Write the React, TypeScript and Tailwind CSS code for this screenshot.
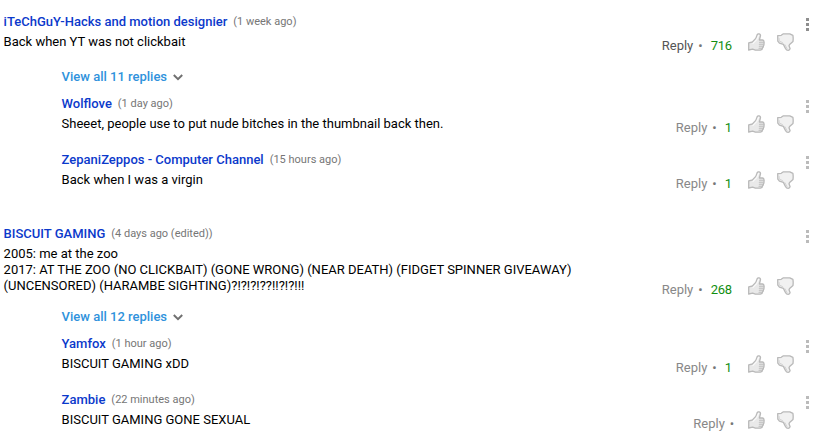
import React from "react";

type Post = {
  author: string;
  time: string;
  lines: string[];
  likes?: string;
  active?: boolean;
};

function ThumbUp() {
  return (
    <svg className="h-[18px] w-[17px]" viewBox="0 0 17 18" fill="none" strokeLinejoin="round" strokeLinecap="round">
      <path fill="#e9e9e9" stroke="#b9b9b9" strokeWidth="1.3" d="M.7 9.8 4.4 9 7.8 5.4 9.2 1.6Q9.8.5 11.2.9q1.6.5 1.2 2.1L11.4 7h3q1.7.2 1.5 1.8.5 1 0 2 .3 1.2-.5 2.1.1 1.3-.9 2 0 1.9-2.2 2.3H7.4L4.6 16.2.7 17Z" />
      <path stroke="#bdbdbd" strokeWidth="1.1" d="M11.5 9.2h4M11.3 11.3h4M11.3 13.3h3.6M11 15.3h3" />
      <path stroke="#fafafa" strokeWidth="1.2" d="M5 10.3 8.9 6.3 10.6 2.4" />
    </svg>
  );
}

function ThumbDown() {
  return (
    <svg className="h-[18px] w-[17px]" viewBox="0 0 17 18" fill="none" strokeLinejoin="round" strokeLinecap="round">
      <path fill="#f1f1f1" stroke="#b9b9b9" strokeWidth="1.3" d="M.7 2.6 4.2 2.3 6.4.8h6.4l3.1 1.5q.5 2.7.1 6.1L12.6 11.4 12 12.7 13.1 15.7q-.3 1.4-1.8 1.6-1.8.1-2.7-1.5L6.4 11.4 2.4 10.1.8 8.2Z" />
      <path stroke="#d2d2d2" strokeWidth="1" d="M2.1 5.5v2.4L5.5 9.6M8 11.8l2 3.9" />
    </svg>
  );
}

function Comment({ post }: { post: Post }) {
  return (
    <article className="flex">
      <div className="min-w-0 flex-1 pb-[5px]">
        <header className="flex h-5 items-center gap-1.5 whitespace-nowrap">
          <a className="text-[13px] font-medium text-[#0b39cb]">{post.author}</a>
          <span className="text-[11px] text-[#767676]">({post.time})</span>
        </header>
        <div className="mt-0.5 text-[13px] leading-4 whitespace-nowrap text-black">
          {post.lines.map((line) => (
            <p key={line}>{line}</p>
          ))}
        </div>
      </div>
      <div className="-mb-px flex h-5 items-center self-end text-[13px]">
        <span className={post.active ? "text-[#555555]" : "text-[#888888]"}>Reply</span>
        <span className="ml-[5px] text-[#777777]">•</span>
        {post.likes && <span className="ml-2 tracking-[-0.3px] text-[#128e12]">{post.likes}</span>}
      </div>
      <div className={`flex h-[22px] gap-3 self-end ${post.likes ? "ml-4" : "ml-[13.5px]"}`}>
        <ThumbUp />
        <ThumbDown />
      </div>
      <div className={`mt-1.5 mr-[13px] ml-[12.3px] flex w-[3px] flex-col gap-0.5 ${post.active ? "text-[#8e8e8e]" : "text-[#bbbbbb]"}`}>
        <i className="size-[3px] bg-current" />
        <i className="size-[3px] bg-current" />
        <i className="size-[3px] bg-current" />
      </div>
    </article>
  );
}

function Thread({ root, total, replies }: { root: Post; total: number; replies: Post[] }) {
  return (
    <section>
      <Comment post={root} />
      <div className={`pl-[58px] ${root.lines.length > 1 ? "pt-2" : "pt-3"}`}>
        <button className="flex h-5 items-center text-[13px] font-medium text-[#2f92dc]">
          View all {total} replies
          <svg className="ml-1.5 h-[7px] w-[10px]" viewBox="0 0 10 7" fill="none" stroke="#707070" strokeWidth="2">
            <path d="M.8 1 5 5.2 9.2 1" />
          </svg>
        </button>
        <div className="mt-[7px] flex flex-col gap-[13px]">
          {replies.map((reply) => (
            <Comment key={reply.author} post={reply} />
          ))}
        </div>
      </div>
    </section>
  );
}

export default function App() {
  return (
    <main className="flex h-[444px] w-[822px] flex-col gap-[31px] overflow-hidden bg-white pt-3 pl-[3.6px] font-['Roboto',sans-serif]">
      <Thread
        root={{ author: "iTeChGuY-Hacks and motion designier", time: "1 week ago", lines: ["Back when YT was not clickbait"], likes: "716", active: true }}
        total={11}
        replies={[
          { author: "Wolflove", time: "1 day ago", lines: ["Sheeet, people use to put nude bitches in the thumbnail back then."], likes: "1" },
          { author: "ZepaniZeppos - Computer Channel", time: "15 hours ago", lines: ["Back when I was a virgin"], likes: "1" },
        ]}
      />
      <Thread
        root={{
          author: "BISCUIT GAMING",
          time: "4 days ago (edited)",
          lines: [
            "2005: me at the zoo",
            "2017: AT THE ZOO (NO CLICKBAIT) (GONE WRONG) (NEAR DEATH) (FIDGET SPINNER GIVEAWAY)",
            "(UNCENSORED) (HARAMBE SIGHTING)?!?!?!??!!?!?!!!",
          ],
          likes: "268",
        }}
        total={12}
        replies={[
          { author: "Yamfox", time: "1 hour ago", lines: ["BISCUIT GAMING xDD"], likes: "1" },
          { author: "Zambie", time: "22 minutes ago", lines: ["BISCUIT GAMING GONE SEXUAL"] },
        ]}
      />
    </main>
  );
}
